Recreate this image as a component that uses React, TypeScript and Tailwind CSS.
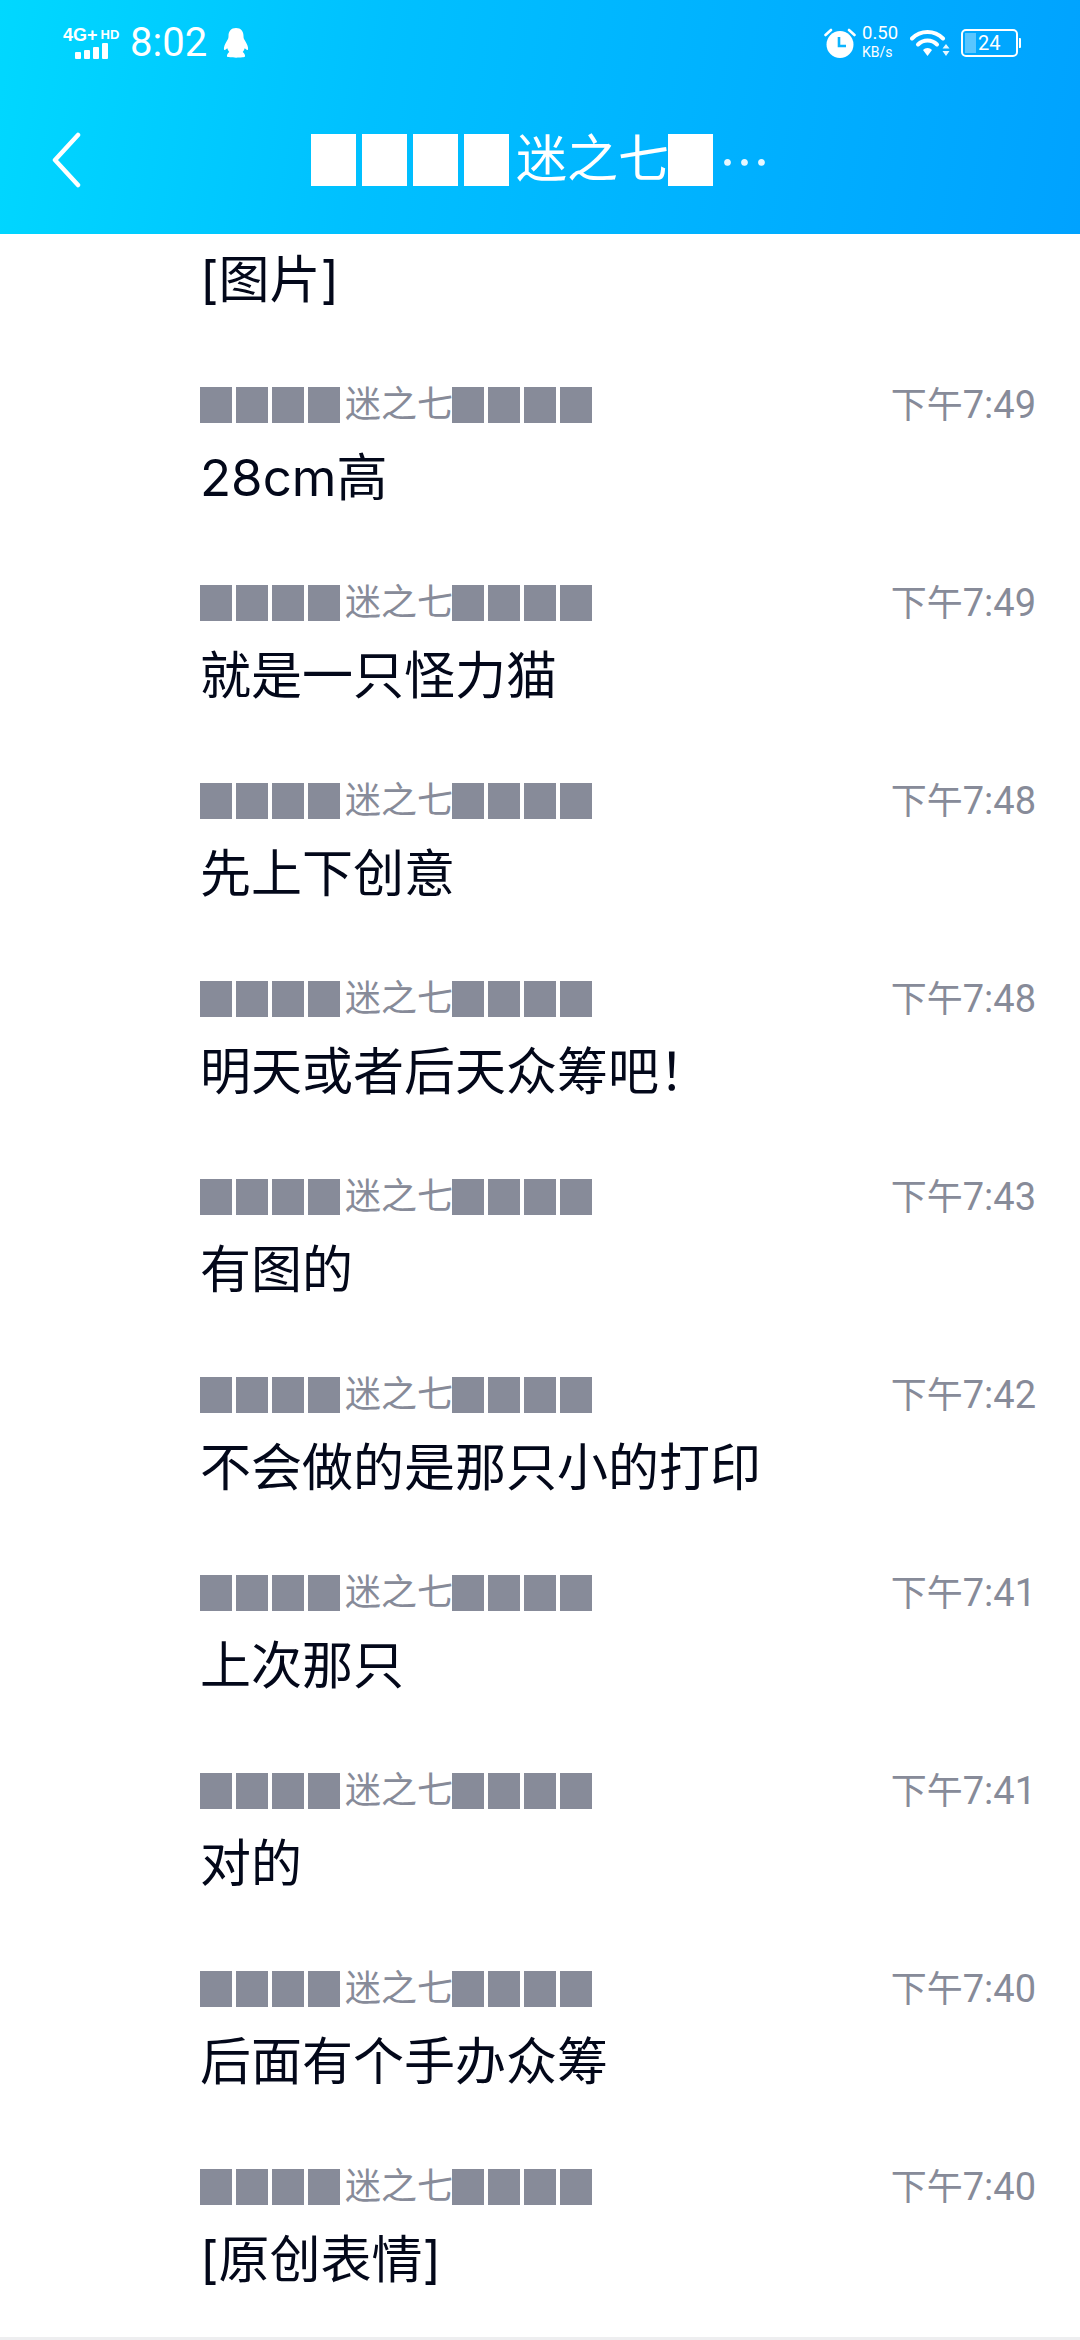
// App.tsx - chat search result list

const MESSAGES = [
  { time: '7:49', text: '28cm高' },
  { time: '7:49', text: '就是一只怪力猫' },
  { time: '7:48', text: '先上下创意' },
  { time: '7:48', text: '明天或者后天众筹吧！' },
  { time: '7:43', text: '有图的' },
  { time: '7:42', text: '不会做的是那只小的打印' },
  { time: '7:41', text: '上次那只' },
  { time: '7:41', text: '对的' },
  { time: '7:40', text: '后面有个手办众筹' },
  { time: '7:40', text: '[原创表情]' },
];

function StatusBar() {
  return (
    <div className="flex h-[86px] items-center justify-between pl-[63px] pr-[59px] text-white">
      <div className="flex items-center">
        <div className="flex w-[58px] flex-col">
          <div className="flex h-[16px] items-start font-['Liberation_Sans',sans-serif] font-bold leading-[16px]">
            <span className="text-[18px]">4G</span>
            <span className="text-[18px]">+</span>
            <span className="ml-[3px] text-[13px]">HD</span>
          </div>
          <div className="ml-[12px] flex h-[16px] items-end gap-[3px]">
            <span className="h-[7px] w-[6px] rounded-[1px] bg-white" />
            <span className="h-[9px] w-[6px] rounded-[1px] bg-white" />
            <span className="h-[12px] w-[6px] rounded-[1px] bg-white" />
            <span className="h-[16px] w-[6px] rounded-[1px] bg-white" />
          </div>
        </div>
        <span className="ml-[9px] text-[40px] leading-none">8:02</span>
        <svg viewBox="0 0 26 30" className="ml-[16px] h-[30px] w-[26px]" fill="#fff">
          <path d="M13 0c-5 0-7.500 3.500-7.500 8 0 1.500-.2 2.500-.8 3.500C3.500 13.800 1.500 16.500 1 19.500c-.3 2 .3 2.800 1 2.500l2.300-1.700c.4 1.500 1 2.700 2 3.800C4.500 25.500 3.800 27 4 28.500 4.300 30 22 30 22 28.500c.2-1.500-.5-3-2.300-4.400 1-1.100 1.600-2.300 2-3.800L24 22c.7.300 1.300-.5 1-2.500-.5-3-2.500-5.700-3.700-8-.6-1-.8-2-.8-3.500C20.500 3.500 18 0 13 0z" />
        </svg>
      </div>
      <div className="flex items-center">
        <svg viewBox="0 0 32 30" className="h-[30px] w-[32px]">
          <circle cx="16" cy="16.500" r="13.500" fill="#fff" />
          <path d="M15 9v9h7" fill="none" stroke="#0bb4ff" strokeWidth="2.600" />
          <path d="M1.500 7 7 2M30.500 7 25 2" stroke="#fff" strokeWidth="2.600" strokeLinecap="round" />
        </svg>
        <div className="ml-[6px] -mt-[2px] flex w-[40px] flex-col items-start">
          <span className="text-[18.500px] leading-[20px]">0.50</span>
          <span className="text-[14px] leading-[18px]">KB/s</span>
        </div>
        <svg viewBox="0 0 40 28" className="ml-[8px] h-[28px] w-[40px]">
          <path d="M2 9.500C6 5.500 11 3 17.500 3S29 5.500 33 9.500" fill="none" stroke="#fff" strokeWidth="4" strokeLinecap="round" />
          <path d="M8 15.500c2.500-2.500 5.500-4 9.500-4s7 1.500 9.500 4" fill="none" stroke="#fff" strokeWidth="4" strokeLinecap="round" />
          <path d="M13 21c1.200-1.200 2.700-2 4.500-2s3.300.8 4.500 2l-4.500 6z" fill="#fff" />
          <path d="M36 15l3.500 4.500h-7zM36 27l3.500-5h-7z" fill="#fff" opacity=".9" />
        </svg>
        <div className="ml-[11px] flex items-center">
          <div className="flex h-[28px] w-[57px] items-center rounded-[5px] border-[2.500px] border-white p-[2px]">
            <span className="h-full w-[11px] bg-white/35" />
            <span className="ml-[2px] text-[20px] leading-none">24</span>
          </div>
          <span className="ml-[1px] h-[10px] w-[2px] rounded-r-[1px] bg-white" />
        </div>
      </div>
    </div>
  );
}

function Header() {
  return (
    <div className="h-[234px] bg-[linear-gradient(100deg,#00d8ff_0%,#00c0ff_35%,#00a2ff_100%)]">
      <StatusBar />
      <div className="flex h-[148px] items-center pl-[50px] text-white">
        <svg viewBox="0 0 32 56" className="h-[56px] w-[32px]" fill="none" stroke="#fff" strokeWidth="4.500" strokeLinecap="round" strokeLinejoin="round">
          <path d="M28 3 5 28l23 25" />
        </svg>
        <div className="ml-[226px] flex items-center text-[51px] leading-[60px]">
          <Block big />
          <Block big />
          <Block big />
          <Block big />
          <span className="ml-[4px] mr-[-4px]">迷之七</span>
          <Block big />
          <span className="ml-[3px] font-['Noto_Sans_CJK_SC',sans-serif] opacity-90">…</span>
        </div>
      </div>
    </div>
  );
}

function Block({ big }: { big?: boolean }) {
  if (big) {
    return <span className="mx-[3px] inline-block h-[52px] w-[45px] bg-white" />;
  }
  return <span className="mx-[2px] inline-block h-[36px] w-[32px] bg-[#878b99]" />;
}

function Message({ text }: { text: string }) {
  return (
    <div className="h-[70px] pl-[200px] font-['Inter','Noto_Sans_CJK_SC',sans-serif] text-[51px] leading-[70px] text-[#03081a]">
      {text}
    </div>
  );
}

function Row({ time, text }: { time: string; text: string }) {
  return (
    <div className="flex flex-col gap-[13px] pb-[65px]">
      <div className="flex h-[50px] items-center justify-between pl-[198px] pr-[44px] text-[36px] leading-[50px] text-[#878b99]">
        <div className="flex items-center">
          <Block />
          <Block />
          <Block />
          <Block />
          <span className="ml-[3px] mr-[-3px]">迷之七</span>
          <Block />
          <Block />
          <Block />
          <Block />
        </div>
        <span>
          下午<span className="text-[38px]">{time}</span>
        </span>
      </div>
      <Message text={text} />
    </div>
  );
}

export default function App() {
  return (
    <div className="flex h-[2340px] w-[1080px] flex-col overflow-hidden bg-white font-['Roboto','Noto_Sans_CJK_SC',sans-serif]">
      <Header />
      <div className="flex-1 overflow-hidden pt-[11px]">
        <div className="pb-[65px]">
          <Message text="[图片]" />
        </div>
        {MESSAGES.map((m, idx) => (
          <Row key={idx} time={m.time} text={m.text} />
        ))}
      </div>
      <div className="h-[3px] bg-[#eeeef0]" />
    </div>
  );
}
